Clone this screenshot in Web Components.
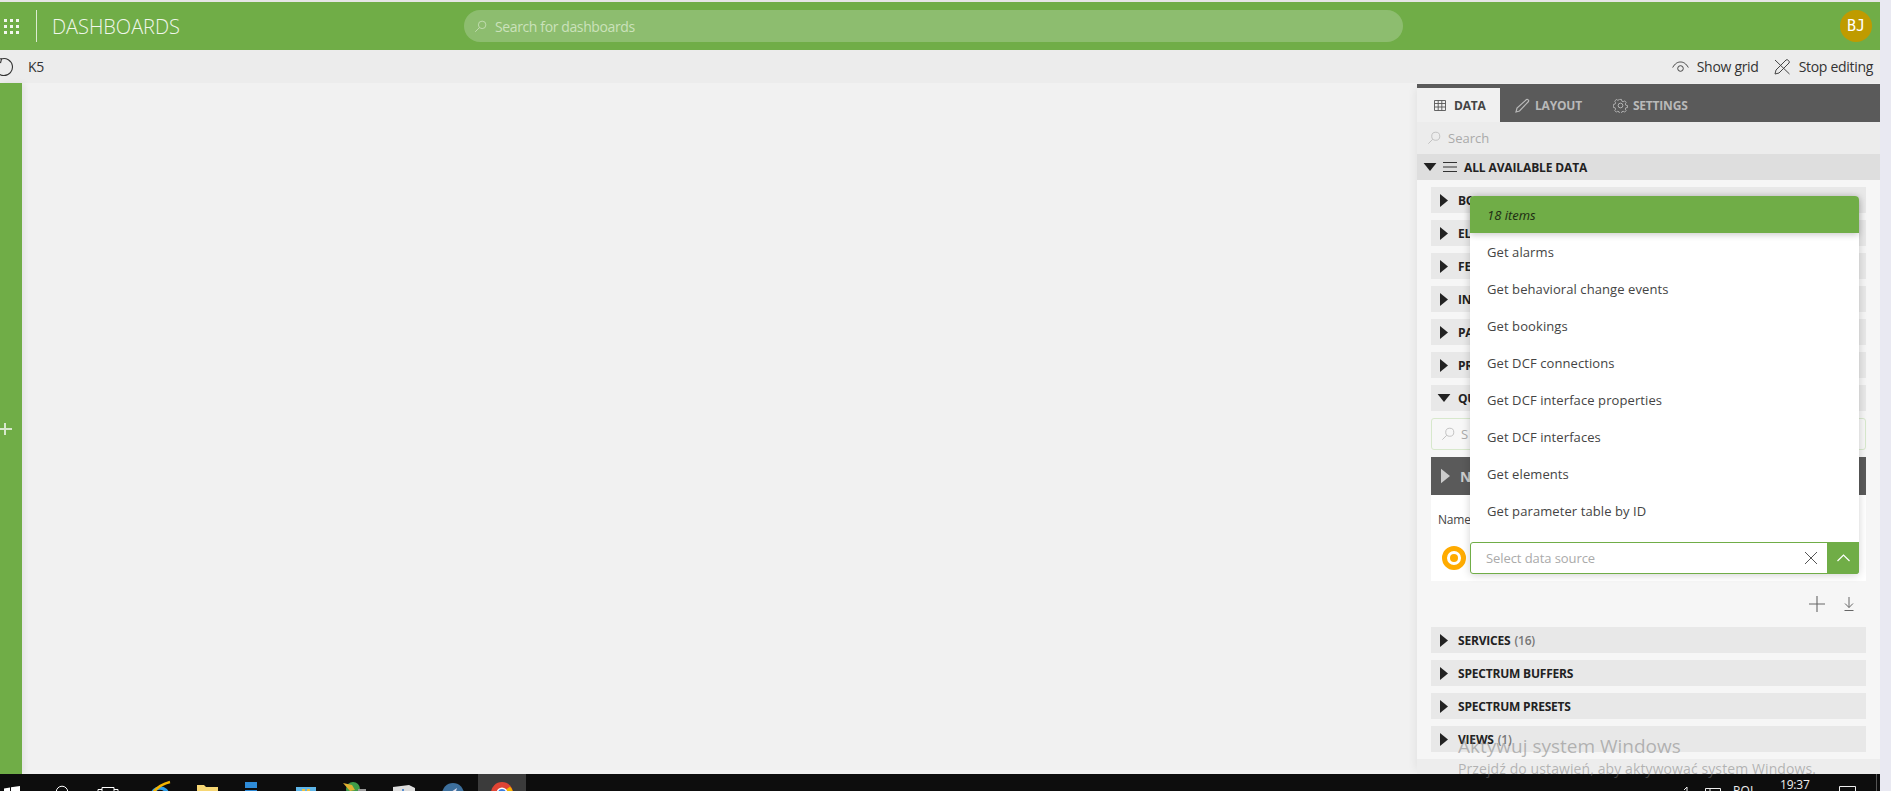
<!DOCTYPE html>
<html><head><meta charset="utf-8">
<style>
html,body{margin:0;padding:0;height:100%;overflow:hidden;background:#e9e9f2;font-family:"Open Sans","Noto Sans",sans-serif}
app-shell{display:block}
</style></head><body>
<app-shell></app-shell>
<script>
const I={
 search:(s,c)=>`<svg width="${s}" height="${s}" viewBox="0 0 16 16" fill="none" stroke="${c}" stroke-width="1"><circle cx="10" cy="6" r="4.6"/><path d="M6.6 9.4 1.5 14.5"/></svg>`,
 tri:(w,h,c)=>`<svg width="${w}" height="${h}" viewBox="0 0 10 16"><path d="M0 0l10 8-10 8z" fill="${c}"/></svg>`,
 down:(w,h,c)=>`<svg width="${w}" height="${h}" viewBox="0 0 16 10"><path d="M0 0h16L8 10z" fill="${c}"/></svg>`
};
function def(name,html,init){
 customElements.define(name,class extends HTMLElement{
  constructor(){super();this.attachShadow({mode:'open'});if(!init)this.shadowRoot.innerHTML=html}
  connectedCallback(){ if(init&&!this._i){this._i=1;this.shadowRoot.innerHTML=html(this)} }
 });
}
def('top-bar',`<style>
:host{display:flex;align-items:center;height:48px;margin-top:2px;background:#70ad47;color:#fff;position:relative;flex:none}
.grid{width:16px;margin-left:4px;display:grid;grid-template-columns:repeat(3,3px);gap:3px;flex:none}
.grid i{width:3px;height:3px;background:#f2f7ee}
.sep{width:1px;height:32px;background:#dcebd2;margin-left:16px;flex:none}
.t{font-size:20px;margin-left:15px;color:#f1f7ec;font-weight:300;width:412px;flex:none;letter-spacing:-.02px}
.s{width:939px;height:32px;border-radius:16px;background:#8dbd6f;display:flex;align-items:center;padding-left:10px;box-sizing:border-box;font-size:14px;color:#cbe2bb;gap:8px;flex:none;letter-spacing:-.38px}
.a{margin-left:auto;margin-right:8px;width:32px;height:32px;border-radius:50%;background:#bf9b00;color:#fff;font:15px "DejaVu Sans Mono",monospace;display:flex;align-items:center;justify-content:center}
</style><div class="grid"><i></i><i></i><i></i><i></i><i></i><i></i><i></i><i></i><i></i></div><div class="sep"></div><div class="t">DASHBOARDS</div>
<div class="s">${I.search(13,'#cbe2bb')}<span>Search for dashboards</span></div><div class="a">BJ</div>`);

def('sub-bar',`<style>
:host{display:flex;align-items:center;height:33px;background:#ececec;color:#333;font-size:14px;flex:none;letter-spacing:-.3px}
svg{flex:none}.r{margin-left:auto;display:flex;align-items:center;margin-right:7px}
</style>
<svg style="margin-left:-6px" width="20" height="20" viewBox="0 0 20 20" fill="none" stroke="#333" stroke-width="1.1"><path d="M7.200 2A8.500 8.500 0 1 1 1.600 8.500"/><path d="M3.500 1.500 7.500 2 6.500 6"/></svg>
<span style="margin-left:14px">K5</span>
<div class="r"><svg width="17" height="12" viewBox="0 0 17 12" fill="none" stroke="#444"><path d="M.7 6.500C3 2.500 5.500 1 8.500 1s5.500 1.500 7.800 5.500"/><circle cx="8.500" cy="7.500" r="2.800"/></svg><span style="margin-left:8px">Show grid</span>
<svg style="margin-left:15px" width="17" height="17" viewBox="0 0 17 17" fill="none" stroke="#444"><path d="M1 2 15.500 16"/><path d="M1 16l1-4L12 2q1-1 2.500.5T15 5L5 15z"/></svg><span style="margin-left:8px">Stop editing</span></div>`);

def('side-tabs',`<style>
:host{display:flex;height:38px;background:#5a5a5a;align-items:flex-end;flex:none;font-size:12px;font-weight:700;color:#b9b9b9;letter-spacing:-.2px}
.t{display:flex;align-items:center;height:34px;gap:8px}
.a{width:83px;background:#f0f0f0;color:#444;padding-left:17px;box-sizing:border-box}
</style>
<div class="t a"><svg width="12" height="11" viewBox="0 0 12 11" fill="none" stroke="#555" stroke-width=".9"><path d="M.5.5h11v10H.5zM.5 3.500h11M.5 7h11M4.200.500v10M7.800.500v10"/></svg>DATA</div>
<div class="t" style="margin-left:15px;gap:5px"><svg width="15" height="15" viewBox="0 0 15 15" fill="none" stroke="#b9b9b9" stroke-width="1.200"><path d="M1 14l1-4L11.500 1.500c1-.8 2.800 1 2 2L4.500 13z"/></svg>LAYOUT</div>
<div class="t" style="margin-left:31px;gap:5px"><svg width="15" height="15" viewBox="0 0 16 16" fill="none" stroke="#b9b9b9"><circle cx="8" cy="8" r="2.500"/><path d="M6.800 1h2.400l.4 2 1.500.7 1.800-1 1.700 1.700-1 1.800.6 1.500 2 .4v2.400l-2 .2-.6 1.500 1 1.800-1.700 1.700-1.800-1-1.500.6-.4 2H6.800l-.4-2-1.500-.6-1.800 1-1.700-1.700 1-1.800-.6-1.500-2-.4V6.800l2-.4.6-1.500-1-1.800L3.100 1l1.800 1 1.500-.6z" transform="translate(.6 .6) scale(.92)"/></svg>SETTINGS</div>`);

def('group-row',el=>`<style>
:host{display:flex;align-items:center;height:26px;background:#e8e8e8;margin:0 14px 7px;font-size:12px;font-weight:700;color:#222;flex:none;letter-spacing:-.2px}
svg{margin-left:9px;margin-right:10px;flex:none}.c{font-weight:600;color:#777;margin-left:4px}
</style>${el.hasAttribute('open')?`<svg style="margin-left:6px;margin-right:7px" width="14" height="8" viewBox="0 0 16 10"><path d="M0 0h16L8 10z" fill="#222"/></svg>`:`<svg width="8" height="13" viewBox="0 0 10 16"><path d="M0 0l10 8-10 8z" fill="#222"/></svg>`}<slot></slot>${el.getAttribute('count')?`<span class="c">(${el.getAttribute('count')})</span>`:''}`,true);

def('query-editor',`<style>
:host{display:block;margin:0 14px;flex:none}
.s{height:32px;box-sizing:border-box;border:1px solid #d7e8cc;border-radius:3px;background:#f7f7f7;display:flex;align-items:center;padding-left:9px;gap:6px;font-size:13px;color:#aaa}
.h{height:38px;background:#5a5a5a;margin-top:7px;display:flex;align-items:center;padding-left:10px;gap:10px;font-size:14px;font-weight:700;color:#ccc}
.b{height:86px;background:#fff;position:relative;font-size:12px;color:#444}
.n{position:absolute;left:7px;top:16px;letter-spacing:-.2px}
.o{position:absolute;left:11px;top:51px;width:14px;height:14px;border:5px solid #ffab00;border-radius:50%;box-sizing:content-box;background:#fff}
.o::after{content:"";position:absolute;left:3px;top:3px;width:8px;height:8px;border-radius:50%;background:#ffab00}
.x{height:46px;display:flex;align-items:center;justify-content:flex-end;gap:19px;padding:0 12px 0 0;box-sizing:border-box}
</style>
<div class="s">${I.search(14,'#bbb')}<span>S</span></div>
<div class="h">${I.tri(9,16,'#ccc')}<span>N</span></div>
<div class="b"><span class="n">Name</span><div class="o"></div></div>
<div class="x"><svg width="16" height="16" viewBox="0 0 16 16" stroke="#666" stroke-width="1.100"><path d="M8 0v16M0 8h16"/></svg><svg width="10" height="14" viewBox="0 0 10 14" fill="none" stroke="#666"><path d="M5 0v10.500M1 6.500l4 4 4-4M.5 13.500h9"/></svg></div>`);

def('data-panel',`<style>
:host{display:flex;flex-direction:column;width:463px;flex:none;background:#f6f6f6;position:relative;box-shadow:-6px 0 8px -4px rgba(0,0,0,.06);overflow:hidden;margin-top:1px}
.q{height:32px;background:#ececec;display:flex;align-items:center;padding-left:10px;gap:7px;font-size:13px;color:#aaa;flex:none}
.all{height:26px;background:#dedede;display:flex;align-items:center;font-size:12px;font-weight:700;color:#222;flex:none;margin-bottom:7px;letter-spacing:-.12px}
.all svg{flex:none}
.end{flex:1;background:#ededed}
</style>
<side-tabs></side-tabs>
<div class="q">${I.search(14,'#bbb')}<span>Search</span></div>
<div class="all"><svg style="margin:0 6px 0 6px" width="14" height="8" viewBox="0 0 16 10"><path d="M0 0h16L8 10z" fill="#222"/></svg><svg style="margin-right:7px" width="14" height="10" viewBox="0 0 14 10" stroke="#333"><path d="M0 .5h14M0 5h14M0 9.500h14"/></svg>ALL AVAILABLE DATA</div>
<group-row>BOOKINGS</group-row><group-row>ELEMENTS</group-row><group-row>FEEDS</group-row><group-row>INTERFACES</group-row><group-row>PARAMETERS</group-row><group-row>PROTOCOLS</group-row><group-row open>QUERIES</group-row>
<query-editor></query-editor>
<group-row count="16">SERVICES</group-row><group-row>SPECTRUM BUFFERS</group-row><group-row>SPECTRUM PRESETS</group-row><group-row count="1">VIEWS</group-row>
<div class="end"></div>`);

def('source-dropdown',`<style>
:host{position:absolute;left:1470px;top:196px;width:389px;height:378px;display:flex;flex-direction:column;font-size:13px;color:#444;background:#fff;box-shadow:0 1px 8px rgba(0,0,0,.18);border-radius:4px}
.h{height:37px;background:#70ad47;border-radius:4px 4px 0 0;display:flex;align-items:center;padding-left:17px;font-style:italic;color:#1d2c13;flex:none;box-shadow:0 2px 6px rgba(0,0,0,.2);position:relative}
.l{flex:1;display:flex;flex-direction:column;padding-bottom:12px;letter-spacing:.09px}
.l div{height:37px;display:flex;align-items:center;padding-left:17px;flex:none}
.i{height:32px;border:1px solid #70ad47;box-sizing:border-box;display:flex;align-items:center;padding-left:15px;color:#aaa;flex:none;position:relative;border-radius:3px;letter-spacing:-.08px}
.i svg.x{position:absolute;right:41px;top:9px}
.b{position:absolute;right:-1px;top:-1px;width:32px;height:32px;background:#70ad47;border-radius:0 0 3px 0;display:flex;align-items:center;justify-content:center}
</style>
<div class="h">18 items</div>
<div class="l"><div>Get alarms</div><div>Get behavioral change events</div><div>Get bookings</div><div>Get DCF connections</div><div>Get DCF interface properties</div><div>Get DCF interfaces</div><div>Get elements</div><div>Get parameter table by ID</div></div>
<div class="i">Select data source<svg class="x" width="12" height="12" viewBox="0 0 12 12" stroke="#555"><path d="M0 0l12 12M12 0 0 12"/></svg><div class="b"><svg width="13" height="8" viewBox="0 0 13 8" fill="none" stroke="#fff" stroke-width="1.200"><path d="M.5 7 6.500 1l6 6"/></svg></div></div>`);

def('win-taskbar',`<style>
:host{display:block;height:17px;background:#0d0d0d;flex:none;position:relative;overflow:hidden;color:#eee}
.row{display:flex;align-items:flex-start;height:40px}
.row>*{flex:none}
.cr{background:#3b3b3b;width:48px;height:17px;margin-left:14px;display:flex;justify-content:center;padding-top:8px;box-sizing:border-box}
.tm{position:absolute;left:1780px;top:4px;font-size:12px;line-height:14px;color:#eee;letter-spacing:-.2px}
.pl{position:absolute;left:1733px;top:10px;font-size:12px;line-height:14px;color:#eee;letter-spacing:.2px}
.tr{position:absolute}
</style><div class="row">
<svg style="margin:12px 0 0 0" width="20" height="20" viewBox="0 0 20 20" fill="#fff"><path d="M4 2.500 10 1.500V9H4zM11 1.300 20 0v9h-9z"/></svg>
<svg style="margin:10px 0 0 31px" width="22" height="22" viewBox="0 0 22 22" fill="none" stroke="#fff"><circle cx="11" cy="8" r="5.800"/></svg>
<svg style="margin:12px 0 0 24px" width="22" height="22" viewBox="0 0 22 22" fill="none" stroke="#fff"><path d="M5 1.500h12v12H5zM1 3.500h4M17 3.500h4M1 3.500v8M21 3.500v8"/></svg>
<svg style="margin:6px 0 0 26px" width="30" height="30" viewBox="0 0 30 30" fill="none"><circle cx="15" cy="16" r="8" stroke="#2f9ee8" stroke-width="3.500"/><path d="M5 18C9 9 17 4 25 2" stroke="#f4b400" stroke-width="2.500"/></svg>
<svg style="margin:9px 0 0 21px" width="24" height="24" viewBox="0 0 24 24"><path d="M1 2h7l2 2h12v18H1z" fill="#f7d774"/></svg>
<svg style="margin:8px 0 0 25px" width="12" height="24" viewBox="0 0 12 24"><path d="M0 0h12v6H0zM0 8h12v6H0z" fill="#2e8bd8"/></svg>
<svg style="margin:11px 0 0 36px" width="26" height="24" viewBox="0 0 26 24"><path d="M3 2h20v12H3z" fill="#5fb6e8"/><path d="M9 4h3v4H9zM14 4h3v4h-3z" fill="#f0c040"/></svg>
<svg style="margin:8px 0 0 23px" width="26" height="24" viewBox="0 0 26 24"><circle cx="11" cy="7" r="7" fill="#3f9c4a"/><path d="M1 1l9 2 3 5-5 1z" fill="#e0b030"/><path d="M16 7h8v10h-8z" fill="#999"/></svg>
<svg style="margin:11px 0 0 23px" width="26" height="24" viewBox="0 0 26 24"><path d="M2 2 18 0l6 3v16H2z" fill="#ddd"/><path d="M12 4v7" stroke="#5a8fd0" stroke-width="2"/></svg>
<svg style="margin:9px 0 0 25px" width="22" height="22" viewBox="0 0 22 22"><circle cx="11" cy="11" r="11" fill="#3d6f9c"/><path d="M6 11l9-6-3 10z" fill="#dde"/></svg>
<div class="cr"><svg width="22" height="22" viewBox="0 0 22 22"><circle cx="11" cy="11" r="11" fill="#e04434"/><path d="M19 4.500A11 11 0 0 1 22 11H11z" fill="#f4b400"/><circle cx="11" cy="11" r="5.500" fill="#fff"/><circle cx="11" cy="11" r="4" fill="#3a7de0"/></svg></div>
</div>
<svg class="tr" style="left:1683px;top:13px" width="8" height="10" viewBox="0 0 8 10" fill="none" stroke="#eee"><path d="M4 0v10M1 3l3-3"/></svg>
<svg class="tr" style="left:1705px;top:14px" width="16" height="10" viewBox="0 0 16 10" fill="none" stroke="#eee"><path d="M.5.5h15v9H.5zM5 .5v9"/></svg>
<div class="pl">POL</div>
<svg class="tr" style="left:1839px;top:12px" width="17" height="10" viewBox="0 0 17 10" fill="none" stroke="#eee"><path d="M.5.5h16v9H.5z"/></svg>
<svg class="tr" style="left:1876px;top:0" width="1" height="17"><path d="M.5 0v17" stroke="#555"/></svg>
<div class="tm">19:37</div>`);

def('app-shell',`<style>
:host{display:flex;height:791px;width:1891px;overflow:hidden;position:relative}
.m{width:1880px;display:flex;flex-direction:column;height:791px;background:#f0f0f0;flex:none;position:relative}
.top{height:2px;background:#e6e6e6;flex:none;margin-bottom:-2px}
.c{flex:1;display:flex;min-height:0}
.gs{width:22px;background:#70ad47;flex:none;display:flex;align-items:center;box-shadow:3px 0 6px rgba(0,0,0,.06);position:relative}
.cv{flex:1;background:#f1f1f1}
.e{flex:none;width:11px;background:linear-gradient(90deg,#f3f3f7 0 7px,#c9c9d6 7px 8px,#e9e9f2 8px)}
.wm{position:absolute;left:1458px;top:733px;color:rgba(120,120,120,.5);font-size:19px;line-height:26px;white-space:nowrap}
.wm small{display:block;font-size:14px;line-height:22px;margin-top:-1px;letter-spacing:.1px}
</style>
<div class="m"><div class="top"></div><top-bar></top-bar><sub-bar></sub-bar>
<div class="c"><div class="gs"><svg width="12" height="12" viewBox="0 0 12 12" stroke="#d7e8cc" stroke-width="2"><path d="M5 0v12M0 6h12"/></svg></div><div class="cv"></div><data-panel></data-panel></div>
<win-taskbar></win-taskbar>
<source-dropdown></source-dropdown>
<div class="wm">Aktywuj system Windows<small>Przejdź do ustawień, aby aktywować system Windows.</small></div>
</div><div class="e"></div>`);
</script></body></html>
